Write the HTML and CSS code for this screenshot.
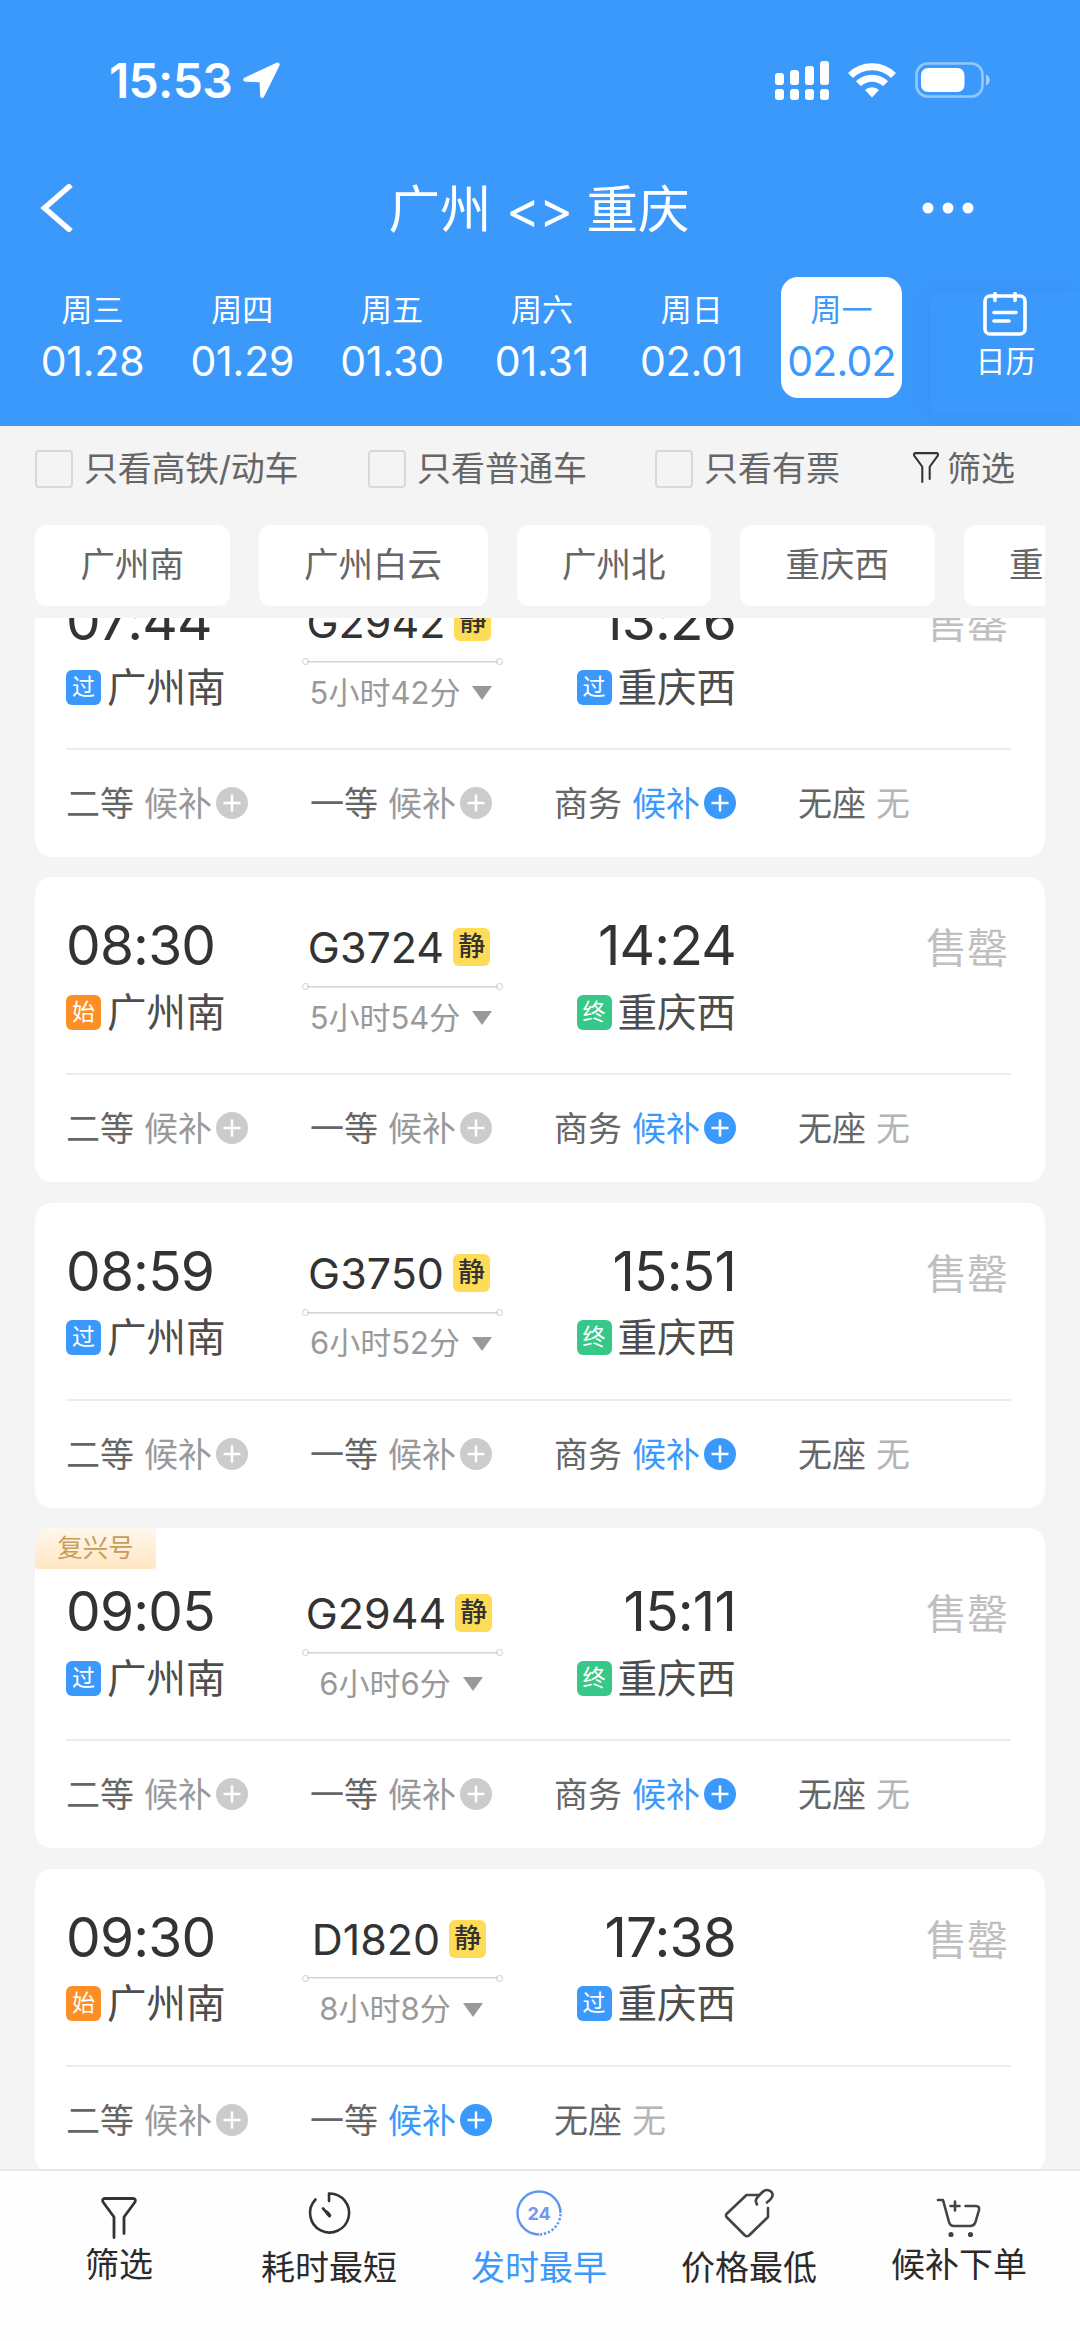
FILE: index.html
```html
<!DOCTYPE html>
<html lang="zh-CN">
<head>
  <meta charset="UTF-8" />
  <title>广州 - 重庆 车票</title>
  <link rel="stylesheet" href="styles.css">
</head>
<body>

  <header>
    <div class="status-bar">
      <div class="status-left">
        <span class="clock">15:53</span>
        <svg class="location" viewBox="0 0 38 36"><path d="M36.500 3.500c.8-2-1-3.600-3-2.800L2 15.500c-2.600 1.200-2.300 4 .6 4.200l14 .5.600 13.500c.1 2.800 3 3.100 4.100.6z" fill="#fff"/></svg>
      </div>
      <div class="status-right">
        <svg class="signal" viewBox="0 0 54 39" fill="#fff">
          <rect x="0" y="12" width="9" height="12" rx="3"/><rect x="15" y="9" width="9" height="15" rx="3"/><rect x="30" y="5" width="9" height="19" rx="3"/><rect x="45" y="0" width="9" height="24" rx="3"/>
          <rect x="0" y="28" width="9" height="11" rx="3"/><rect x="15" y="28" width="9" height="11" rx="3"/><rect x="30" y="28" width="9" height="11" rx="3"/><rect x="45" y="28" width="9" height="11" rx="3"/>
        </svg>
        <svg class="wifi" viewBox="0 0 48 35"><g fill="none" stroke="#fff" stroke-width="7"><path d="M2.500 12.500a30.500 30.500 0 0 1 43 0"/><path d="M10.500 20.800a19 19 0 0 1 27 0"/></g><path d="M24 34.500l-7-7.500a10 10 0 0 1 14 0z" fill="#fff"/></svg>
        <svg class="battery" viewBox="0 0 76 36"><rect x="1.500" y="1.500" width="66" height="33" rx="11" fill="none" stroke="#fff" stroke-opacity=".45" stroke-width="2.600"/><rect x="6" y="6" width="43.500" height="24" rx="7" fill="#fff"/><path d="M71 12.500c5 1.500 5 9.500 0 11z" fill="#fff" fill-opacity=".5"/></svg>
      </div>
    </div>

    <div class="title-bar">
      <svg class="back" viewBox="0 0 34 48"><path d="M31 1L4.500 24 31 47" fill="none" stroke="#fff" stroke-width="5.500"/></svg>
      <h1>广州 <span class="swap">&lt;&gt;</span> 重庆</h1>
      <svg class="more" viewBox="0 0 52 12" fill="#fff"><circle cx="6" cy="6" r="5.500"/><circle cx="26" cy="6" r="5.500"/><circle cx="46" cy="6" r="5.500"/></svg>
    </div>

    <div class="dates">
      <div class="date"><span>周三</span><b>01.28</b></div>
      <div class="date"><span>周四</span><b>01.29</b></div>
      <div class="date"><span>周五</span><b>01.30</b></div>
      <div class="date"><span>周六</span><b>01.31</b></div>
      <div class="date"><span>周日</span><b>02.01</b></div>
      <div class="date active"><span>周一</span><b>02.02</b></div>
      <div class="calendar">
        <svg viewBox="0 0 44 44" fill="none" stroke="#fff" stroke-width="3.600" stroke-linecap="round"><rect x="2" y="4" width="40" height="38" rx="5"/><path d="M12 1.500v7M32 1.500v7M11 20.500h22M11 29h15"/></svg>
        <span>日历</span>
      </div>
    </div>
  </header>

  <div class="filters">
    <label class="check c1"><i></i>只看高铁/动车</label>
    <label class="check c2"><i></i>只看普通车</label>
    <label class="check c3"><i></i>只看有票</label>
    <div class="filter-btn"><svg viewBox="0 0 36 42"><use href="#funnel"/></svg>筛选</div>
  </div>

  <div class="chips">
    <div class="chip">广州南</div>
    <div class="chip">广州白云</div>
    <div class="chip">广州北</div>
    <div class="chip">重庆西</div>
    <div class="chip">重庆北</div>
  </div>

  <div class="train-list" id="train-list"></div>

  <footer>
    <div class="tab">
      <svg viewBox="0 0 50 50"><g transform="translate(7 6)"><use href="#funnel"/></g></svg>
      <span>筛选</span>
    </div>
    <div class="tab low">
      <svg viewBox="0 0 50 50" fill="none" stroke="#333" stroke-width="2.600" stroke-linecap="round" stroke-linejoin="round"><path d="M11.500 11.500A19.500 19.500 0 1 0 25 5.500V13"/><path d="M19 20.500l6.500 7"/><path d="M23 24.500l2.500 3" stroke-width="3.600"/></svg>
      <span>耗时最短</span>
    </div>
    <div class="tab low on">
      <svg viewBox="0 0 50 50"><path d="M46.500 25A21.500 21.500 0 1 0 25 46.500" fill="none" stroke="#5f95f3" stroke-width="2.400"/><path d="M46.500 26A21.500 21.500 0 0 1 25 46.500" fill="none" stroke="#5f95f3" stroke-width="2.400" stroke-dasharray="2.400 1.800"/><text x="25" y="31.500" text-anchor="middle">24</text></svg>
      <span>发时最早</span>
    </div>
    <div class="tab low">
      <svg viewBox="0 0 50 50" fill="none" stroke="#444" stroke-width="2.600" stroke-linecap="round" stroke-linejoin="round"><path d="M35 7H22.500L2.500 26q-1 1.500 0 3L21 47.500q2 1.500 4 0L44 29V20"/><path d="M33 16.500c-2.500-4-.5-6.500 2.500-9.500l3-3c3.500-3.500 9-2 10 2 .8 4-2.500 6-5.500 8.500"/></svg>
      <span>价格最低</span>
    </div>
    <div class="tab">
      <svg viewBox="0 0 50 50" fill="none" stroke="#444" stroke-width="2.600" stroke-linecap="round" stroke-linejoin="round"><path d="M4 9h5l6 22q1 4 5 4h16q4 0 5.500-4l3.500-12q.8-4-3-4H31.500"/><path d="M16.500 15h9M21 10.500v9"/><circle cx="17" cy="43.500" r="1.300" fill="#333"/><circle cx="36.500" cy="43.500" r="1.300" fill="#333"/></svg>
      <span>候补下单</span>
    </div>
  </footer>

  <svg class="sprite">
    <symbol id="funnel" viewBox="0 0 36 42" width="36" height="42"><path d="M13 40.500V20L2 5Q.8 1.500 4 1.500h28q3.200 0 2 3.500L23 20v16.500" fill="none" stroke="#333" stroke-width="2.800" stroke-linecap="round" stroke-linejoin="round"/></symbol>
    <symbol id="plus" viewBox="0 0 32 32"><circle cx="16" cy="16" r="16" fill="currentColor"/><path d="M7.500 16h17M16 7.500v17" stroke="#fff" stroke-width="2.500"/></symbol>
  </svg>

<script>
  // seat: [name, state]  0 = none left, 1 = waitlist closed, 2 = waitlist open
  const usual = [["二等", 1], ["一等", 1], ["商务", 2], ["无座", 0]];
  const trains = [
    { no: "G2942", dep: "07:44", arr: "13:26", from: "过", to: "过", time: "5小时42分", seats: usual },
    { no: "G3724", dep: "08:30", arr: "14:24", from: "始", to: "终", time: "5小时54分", seats: usual },
    { no: "G3750", dep: "08:59", arr: "15:51", from: "过", to: "终", time: "6小时52分", seats: usual },
    { no: "G2944", dep: "09:05", arr: "15:11", from: "过", to: "终", time: "6小时6分", seats: usual, label: "复兴号" },
    { no: "D1820", dep: "09:30", arr: "17:38", from: "始", to: "过", time: "8小时8分", seats: [["二等", 1], ["一等", 2], ["无座", 0]] }
  ];
  const tagClass = { "过": "pass", "始": "start", "终": "end" };

  function renderSeat([name, state]) {
    if (state === 0) return `<div class="seat">${name}<span class="none">无</span></div>`;
    return `<div class="seat">${name}<span class="wait ${state === 2 ? "open" : ""}">候补<svg><use href="#plus"/></svg></span></div>`;
  }

  document.getElementById("train-list").innerHTML = trains.map(t => `
    <div class="card ${t.label ? "labelled" : ""}">
      ${t.label ? `<div class="label">${t.label}</div>` : ""}
      <div class="trip">
        <div class="stop">
          <div class="time">${t.dep}</div>
          <div class="station"><em class="${tagClass[t.from]}">${t.from}</em><span>广州南</span></div>
        </div>
        <div class="train">
          <div class="number">${t.no}<em>静</em></div>
          <div class="line"></div>
          <div class="duration"><span>${t.time}</span><i></i></div>
        </div>
        <div class="stop arrive">
          <div class="time">${t.arr}</div>
          <div class="station"><em class="${tagClass[t.to]}">${t.to}</em><span>重庆西</span></div>
        </div>
        <div class="sold-out">售罄</div>
      </div>
      <div class="seats">${t.seats.map(renderSeat).join("")}</div>
    </div>`).join("");
</script>

</body>
</html>
```
FILE: styles.css
```css
* {
  box-sizing: border-box;
}

body {
  margin: 0;
  width: 1080px;
  height: 2341px;
  overflow: hidden;
  display: flex;
  flex-direction: column;
  background-color: #f4f4f4;
  font-family: Inter, "Noto Sans CJK SC", sans-serif;
  font-size: 34px;
  color: #666;
  white-space: nowrap;
}

svg {
  display: block;
  flex: none;
}

em, i {
  font-style: normal;
}

.sprite {
  display: none;
}

header {
  height: 426px;
  flex: none;
  background-color: #3b99fc;
  color: white;
}

.status-bar {
  height: 160px;
  padding: 0 89px 0 109px;
  display: flex;
  justify-content: space-between;
  align-items: center;
}

.status-left, .status-right {
  display: flex;
  align-items: center;
}

.clock {
  font-size: 48px;
  font-weight: 600;
  letter-spacing: -0.7px;
}

.location {
  width: 38px;
  height: 36px;
  margin-left: 11px;
}

.signal {
  width: 54px;
  height: 39px;
}

.wifi {
  width: 48px;
  height: 35px;
  margin-left: 19px;
}

.battery {
  width: 76px;
  height: 36px;
  margin-left: 19px;
}

.title-bar {
  height: 96px;
  padding: 0 106px 0 40px;
  display: flex;
  justify-content: space-between;
  align-items: center;
}

.back {
  width: 34px;
  height: 48px;
  margin-right: 82px;
}

h1 {
  margin: 0;
  padding-top: 3px;
  font-size: 51.500px;
  font-weight: 400;
  line-height: 93px;
}

.swap {
  letter-spacing: -1px;
}

.more {
  width: 52px;
  height: 12px;
}

.dates {
  display: flex;
  padding: 21px 0 0 32px;
}

.date {
  width: 121px;
  height: 121px;
  margin-right: 28.800px;
  padding-top: 10px;
  border-radius: 17px;
  display: flex;
  flex-direction: column;
  align-items: center;
}

.date span {
  font-size: 31px;
  line-height: 46px;
}

.date b {
  font-size: 41px;
  font-weight: 400;
  line-height: 57px;
  letter-spacing: -0.2px;
}

.date.active {
  background-color: white;
  color: #3b99fc;
}

.date.active b {
  letter-spacing: -0.8px;
}

.calendar {
  flex: 1;
  height: 122px;
  margin-top: 15px;
  display: flex;
  flex-direction: column;
  align-items: center;
  box-shadow: -6px 0 20px rgba(0, 40, 100, 0.06);
}

.calendar svg {
  width: 44px;
  height: 44px;
}

.calendar span {
  font-size: 30px;
  line-height: 50px;
}

.filters {
  height: 80px;
  padding: 0 0 0 35px;
  display: flex;
  align-items: center;
}

.check {
  display: flex;
  align-items: center;
}

.check i {
  width: 38px;
  height: 38px;
  margin: 5px 11px 0 0;
  border: 2px solid #d9d9d9;
  border-radius: 4px;
}

.c1 {
  width: 333px;
  letter-spacing: -0.3px;
}

.c2 {
  width: 287px;
}

.c3 {
  width: 257px;
}

.filter-btn {
  display: flex;
  align-items: center;
}

.filter-btn svg {
  width: 28px;
  height: 31px;
  margin: 2px 7px 0 0;
}

.chips {
  margin: 19px 35px 0;
  display: flex;
  gap: 29px;
  overflow: hidden;
}

.chip {
  flex: none;
  height: 81px;
  padding: 0 45.500px;
  border-radius: 12px;
  background-color: white;
  font-size: 34.500px;
  line-height: 79px;
}

.train-list {
  height: 1551px;
  margin: 12px 35px 0;
  overflow: hidden;
  display: flex;
  flex-direction: column;
  gap: 20.400px;
}

.card {
  height: 305px;
  flex: none;
  border-radius: 17px;
  background-color: white;
  overflow: hidden;
}

/* the list is scrolled a little way down */
.card:first-child {
  margin-top: -66px;
}

.card.labelled {
  height: 320px;
}

.label {
  width: 121px;
  height: 41px;
  margin-bottom: -26px;
  border-radius: 0 0 4px 4px;
  background: linear-gradient(#fff7ee, #ffe6c2);
  color: #c69c5d;
  font-size: 25.500px;
  line-height: 39px;
  text-align: center;
}

.trip {
  height: 198px;
  margin: 0 34px 0 31px;
  border-bottom: 2px solid #ececec;
  display: flex;
}

.stop {
  width: 236px;
  padding-top: 34px;
}

.time {
  font-size: 55px;
  font-weight: 400;
  line-height: 68px;
  letter-spacing: -0.8px;
  color: #333;
}

.station {
  height: 66px;
  display: flex;
  align-items: center;
  font-size: 39.500px;
  color: #4d4d4d;
}

.station em {
  width: 35px;
  height: 35px;
  margin-right: 6px;
  border-radius: 6px;
  color: white;
  font-size: 23px;
  line-height: 34px;
  text-align: center;
}

.station span, .duration span {
  padding-bottom: 6px;
}

.pass {
  background-color: #3b99fc;
}

.start {
  background-color: #fc8f25;
}

.end {
  background-color: #36c888;
}

.train {
  width: 201px;
  padding-top: 40px;
}

.number {
  height: 60px;
  padding-right: 7px;
  display: flex;
  justify-content: center;
  align-items: center;
  font-size: 43px;
  font-weight: 400;
  color: #333;
}

.number em {
  width: 37px;
  height: 38px;
  margin-left: 9px;
  border-radius: 6px;
  background-color: #fedc57;
  font-size: 27px;
  font-weight: 500;
  line-height: 38px;
  text-align: center;
}

.line {
  height: 9px;
  margin-top: 5px;
  display: flex;
  justify-content: space-between;
  align-items: center;
  background: linear-gradient(#d4d4d4, #d4d4d4) 5px 50% / 191px 1.500px no-repeat;
}

.line::before, .line::after {
  content: "";
  width: 5px;
  height: 5px;
  border: 1px solid #ccc;
  border-radius: 50%;
}

.duration {
  height: 54px;
  padding-right: 3px;
  display: flex;
  justify-content: center;
  align-items: center;
  font-size: 31px;
  color: #999;
}

.duration i {
  margin-left: 12px;
  border: 10px solid transparent;
  border-top: 14px solid #999;
  border-bottom: 0;
}

.arrive {
  width: 233px;
  text-align: right;
}

.arrive .station {
  justify-content: flex-end;
}

.sold-out {
  flex: 1;
  padding: 39px 3px 0 0;
  text-align: right;
  font-size: 41px;
  line-height: 65px;
  color: #bfbfbf;
}

.seats {
  height: 107px;
  padding: 0 0 4px 31px;
  display: flex;
}

.seat {
  width: 244px;
  display: flex;
  align-items: center;
}

.seat span {
  margin-left: 10px;
}

.none {
  color: #b5b5b5;
}

.wait {
  display: flex;
  align-items: center;
  color: #999;
}

.wait svg {
  width: 32px;
  height: 32px;
  margin: 3px 0 0 4px;
  color: #ccc;
}

.wait.open, .wait.open svg {
  color: #3b99fc;
}

footer {
  height: 172px;
  flex: none;
  padding: 16px 15px 0 14px;
  border-top: 2px solid #e9e9e9;
  background-color: #fefefe;
  display: flex;
  color: #2b2b2b;
}

.tab {
  width: 210px;
  padding-top: 4px;
  display: flex;
  flex-direction: column;
  align-items: center;
}

.tab svg {
  width: 50px;
  height: 50px;
}

.tab span {
  line-height: 48px;
}

.tab.low {
  padding-top: 1px;
}

.tab.low span {
  margin-top: 6px;
}

.tab.on {
  color: #3b99fc;
}

.tab text {
  font-size: 18px;
  font-weight: 700;
  fill: #7398f0;
}
```
